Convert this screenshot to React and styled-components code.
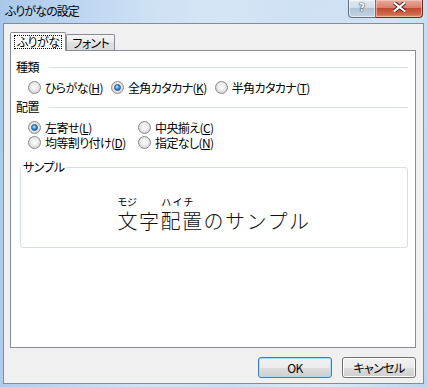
import React from 'react';
import styled, { createGlobalStyle } from 'styled-components';

const UI = `"Noto Sans CJK JP", "Noto Sans", sans-serif`;

const Global = createGlobalStyle`
  html, body { margin: 0; padding: 0; }
  body { width: 427px; height: 387px; overflow: hidden; font-family: ${UI}; }
`;

const Window = styled.div`
  width: 427px;
  height: 387px;
  box-sizing: border-box;
  display: flex;
  flex-direction: column;
  font-family: ${UI};
  font-feature-settings: "palt";
  letter-spacing: -0.6px;
  color: #000;
  background:
    linear-gradient(100deg, rgba(255,255,255,0) 0%, rgba(255,255,255,0.25) 45%, rgba(255,255,255,0) 60%, rgba(255,255,255,0.3) 80%, rgba(255,255,255,0) 100%),
    linear-gradient(90deg, #a9c8ea 0%, #c4daf2 35%, #cfe1f4 70%, #bcd4ee 100%);
`;

const TitleBar = styled.div`
  height: 23px;
  flex-shrink: 0;
  display: flex;
  align-items: flex-start;
`;

const Title = styled.div`
  padding: 3px 0 0 5px;
  font-size: 12px;
  line-height: 16px;
  letter-spacing: -0.9px;
`;

const Caption = styled.div`
  margin-left: auto;
  margin-right: 4px;
  display: flex;
`;

const HelpBtn = styled.div`
  width: 28px;
  height: 18px;
  box-sizing: border-box;
  border: 1px solid #5e6f82;
  border-top: none;
  border-bottom-left-radius: 4px;
  background: linear-gradient(180deg, #e3ebf3 0%, #cfdbe8 45%, #b3c3d5 50%, #c4d3e3 100%);
  box-shadow: inset 0 0 0 1px rgba(255,255,255,0.55);
  display: flex;
  align-items: center;
  justify-content: center;
  font-family: "DejaVu Sans", sans-serif;
  font-weight: bold;
  font-size: 11px;
  line-height: 11px;
  letter-spacing: 0;
  color: #fff;
  text-shadow: 0 0 1px #2a3b4f, 0 0 1px #2a3b4f, 0 0 1px #2a3b4f;
  padding-bottom: 3px;
`;

const CloseBtn = styled.div`
  width: 47px;
  height: 18px;
  box-sizing: border-box;
  border: 1px solid #6b2a22;
  border-left: none;
  border-top: none;
  border-bottom-right-radius: 4px;
  background: linear-gradient(180deg, #e9a99c 0%, #d9806e 45%, #c24a32 50%, #d06a4c 85%, #e39a72 100%);
  box-shadow: inset 0 0 0 1px rgba(255,220,210,0.5);
  display: flex;
  align-items: center;
  justify-content: center;
  padding-bottom: 3px;
`;

const Client = styled.div`
  flex: 1;
  margin: 0 3px 3px 3px;
  border: 1px solid #7f8e9e;
  background: #f0f0f0;
  display: flex;
  flex-direction: column;
  padding: 8px 7px 0 6px;
`;

const TabStrip = styled.div`
  height: 18px;
  display: flex;
  align-items: flex-end;
`;

const Tab = styled.div`
  position: relative;
  box-sizing: border-box;
  border: 1px solid #898c95;
  border-bottom: none;
  border-radius: 2px 2px 0 0;
  font-size: 12px;
  display: flex;
  align-items: center;
  ${p => p.$active ? `
    height: 19px;
    margin-bottom: -1px;
    z-index: 2;
    background: #fff;
    padding: 0 3px 1px 3px;
  ` : `
    height: 16px;
    background: linear-gradient(180deg, #f4f4f4 0%, #ececec 50%, #e2e2e2 50%, #dadada 100%);
    padding: 0 5px 0 5px;
    line-height: 14px;
  `}
`;

const FocusRing = styled.span`
  border: 1px dotted #000;
  padding: 0 2px;
  line-height: 12px;
`;

const Panel = styled.div`
  height: 298px;
  flex-shrink: 0;
  box-sizing: border-box;
  border: 1px solid #898c95;
  background: #fff;
  padding: 8px 7px 0 5px;
  display: flex;
  flex-direction: column;
`;

const Header = styled.div`
  height: 16px;
  margin-top: ${p => p.$mt || 0}px;
  display: flex;
  align-items: center;
  gap: 10px;
  font-size: 12px;
  line-height: 16px;
  &::after {
    content: '';
    flex: 1;
    height: 1px;
    background: #d5dfe5;
  }
`;

const RadioRow = styled.div`
  margin: 4px 0 0 12px;
  height: 16px;
  display: flex;
  gap: 8px;
`;

const RadioGrid = styled.div`
  margin: 5px 0 0 12px;
  display: grid;
  grid-template-columns: 110px auto;
  grid-auto-rows: 15px;
`;

const RadioLabel = styled.label`
  display: inline-flex;
  align-items: center;
  gap: 4px;
  font-size: 12px;
  line-height: 15px;
  white-space: nowrap;
  u { text-decoration-thickness: 1px; text-underline-offset: 1px; }
`;

const RadioCircle = styled.span`
  width: 13px;
  height: 13px;
  box-sizing: border-box;
  border-radius: 50%;
  border: 1px solid #8b8b8b;
  background: radial-gradient(circle at 50% 45%, #ffffff 0%, #ececec 45%, #cfcfcf 80%, #bdbdbd 100%);
  display: flex;
  align-items: center;
  justify-content: center;
  flex-shrink: 0;
  &::after {
    content: '';
    display: ${p => (p.$checked ? 'block' : 'none')};
    width: 7px;
    height: 7px;
    border-radius: 50%;
    box-sizing: border-box;
    border: 1px solid #1a4f86;
    background: radial-gradient(circle at 40% 35%, #bfeaff 0%, #3b9ae0 45%, #0d4c8c 100%);
  }
`;

const SampleBox = styled.fieldset`
  margin: 11px 0 0 4px;
  padding: 0;
  border: 1px solid #d5dfe5;
  border-radius: 3px;
  min-width: 0;
`;

const Legend = styled.legend`
  margin-left: 1px;
  padding: 0 1px;
  font-size: 12px;
  line-height: 12px;
`;

const SampleArea = styled.div`
  height: 74px;
  box-sizing: border-box;
  padding-top: 23px;
  display: flex;
  justify-content: center;
`;

const SampleBlock = styled.div`
  display: flex;
  flex-direction: column;
`;

const RubyRow = styled.div`
  display: flex;
  font-size: 10px;
  line-height: 11px;
  height: 11px;
  letter-spacing: 0;
`;

const Ruby = styled.span`
  width: ${p => p.$w}px;
  letter-spacing: ${p => p.$ls}px;
`;

const SampleText = styled.div`
  margin-top: 3px;
  font-size: 20px;
  font-weight: 300;
  line-height: 22px;
  letter-spacing: 1.5px;
  font-feature-settings: normal;
  white-space: nowrap;
  color: #111;
`;

const ButtonRow = styled.div`
  margin-top: 9px;
  display: flex;
  justify-content: flex-end;
  gap: 10px;
`;

const Button = styled.button`
  width: 74px;
  height: 21px;
  box-sizing: border-box;
  padding: 0;
  font-family: ${UI};
  font-feature-settings: "palt";
  letter-spacing: -0.6px;
  font-size: 12px;
  color: #000;
  border-radius: 3px;
  border: 1px solid ${p => (p.$default ? '#3c7fb1' : '#707070')};
  background: linear-gradient(180deg, #f2f2f2 0%, #ebebeb 50%, #dddddd 50%, #cfcfcf 100%);
  box-shadow: inset 0 0 0 1px ${p => (p.$default ? '#a9dcf6' : '#fcfcfc')};
`;

function Radio({ checked, text, acc }) {
  return (
    <RadioLabel>
      <RadioCircle $checked={checked} />
      <span>{text}(<u>{acc}</u>)</span>
    </RadioLabel>
  );
}

export default function App() {
  return (
    <>
      <Global />
      <Window>
        <TitleBar>
          <Title>ふりがなの設定</Title>
          <Caption>
            <HelpBtn>?</HelpBtn>
            <CloseBtn>
              <svg width="13" height="10" viewBox="0 0 13 10">
                <path d="M1.5 1 L11.5 9 M11.5 1 L1.5 9" stroke="#4a1a12" strokeWidth="4" strokeLinecap="square" />
                <path d="M1.5 1 L11.5 9 M11.5 1 L1.5 9" stroke="#ffffff" strokeWidth="2.2" strokeLinecap="square" />
              </svg>
            </CloseBtn>
          </Caption>
        </TitleBar>
        <Client>
          <TabStrip>
            <Tab $active><FocusRing>ふりがな</FocusRing></Tab>
            <Tab>フォント</Tab>
          </TabStrip>
          <Panel>
            <Header>種類</Header>
            <RadioRow>
              <Radio text="ひらがな" acc="H" />
              <Radio checked text="全角カタカナ" acc="K" />
              <Radio text="半角カタカナ" acc="T" />
            </RadioRow>
            <Header $mt={4}>配置</Header>
            <RadioGrid>
              <Radio checked text="左寄せ" acc="L" />
              <Radio text="中央揃え" acc="C" />
              <Radio text="均等割り付け" acc="D" />
              <Radio text="指定なし" acc="N" />
            </RadioGrid>
            <SampleBox>
              <Legend>サンプル</Legend>
              <SampleArea>
                <SampleBlock>
                  <RubyRow>
                    <Ruby $w={44} $ls={0}>モジ</Ruby>
                    <Ruby $ls={2}>ハイチ</Ruby>
                  </RubyRow>
                  <SampleText>文字配置のサンプル</SampleText>
                </SampleBlock>
              </SampleArea>
            </SampleBox>
          </Panel>
          <ButtonRow>
            <Button $default>OK</Button>
            <Button>キャンセル</Button>
          </ButtonRow>
        </Client>
      </Window>
    </>
  );
}
